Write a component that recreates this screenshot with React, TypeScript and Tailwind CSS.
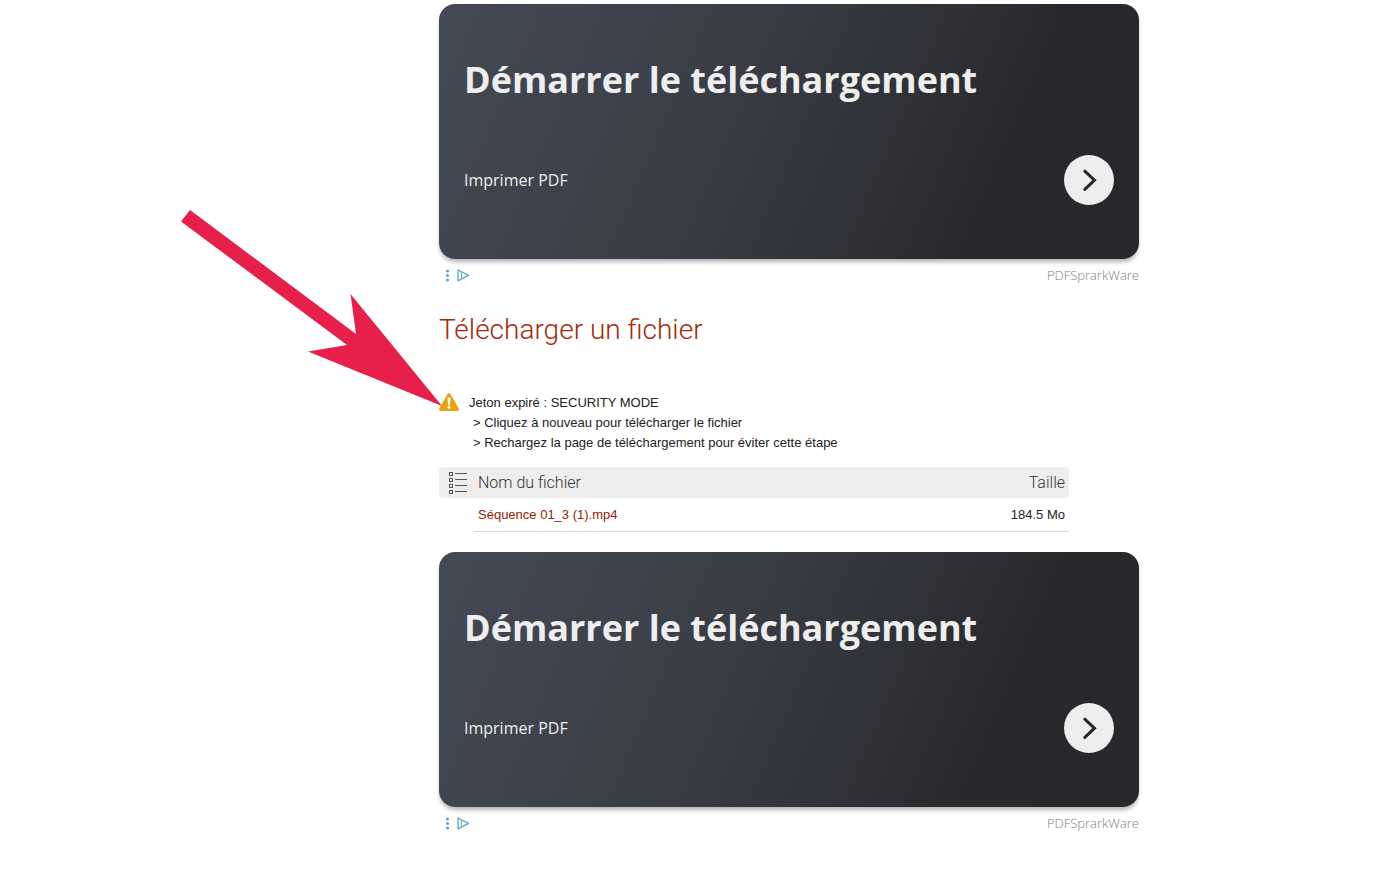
const FILES = [{ name: 'Séquence 01_3 (1).mp4', size: '184.5 Mo' }];

function AdBanner() {
  return (
    <section className="font-['Open_Sans',sans-serif]">
      <div className="flex h-[255px] flex-col rounded-2xl bg-linear-[113deg,#434955_0%,#3b3f48_34%,#32343b_58%,#29292d_77%,#28282c_100%] px-[25px] pt-[51px] text-[#eeeeee] shadow-[0_4px_4px_-1px_rgba(0,0,0,0.3)]">
        <h2 className="text-4xl leading-[50px] font-bold">Démarrer le téléchargement</h2>
        <div className="mt-[50px] flex items-center justify-between">
          <span className="text-base">Imprimer PDF</span>
          <button
            aria-label="Ouvrir"
            className="flex size-[50px] items-center justify-center rounded-full bg-[#eeeeee]"
          >
            <svg viewBox="0 0 50 50" className="size-[50px]" fill="none" stroke="#27272b" strokeWidth="3" strokeLinecap="round">
              <path d="M20.8 16.2 L30.5 25.2 L20.8 34.4" />
            </svg>
          </button>
        </div>
      </div>
      {/* Ad choices */}
      <div className="flex h-[33px] items-center justify-between">
        <svg viewBox="0 0 32 16" className="h-4 w-8" fill="none" stroke="#5ba7cb">
          <g fill="#5ba7cb" stroke="none">
            <circle cx="8.5" cy="3" r="1.6" />
            <circle cx="8.5" cy="7.5" r="1.6" />
            <circle cx="8.5" cy="12" r="1.6" />
          </g>
          <path d="M19 2 L29.5 7.4 L19 12.8 Z" strokeWidth="1.3" strokeLinejoin="round" />
          <path d="M22.4 4.4 V10.4" strokeWidth="1" />
        </svg>
        <span className="text-[13px] font-light text-[#808080]">PDFSprarkWare</span>
      </div>
    </section>
  );
}

function WarningIcon() {
  return (
    <svg viewBox="0 0 20 18" className="h-[18px] w-5 shrink-0">
      <path d="M10 0.2 C10.9 0.2 11.4 0.8 11.8 1.5 L19.6 15.2 C20.4 16.7 19.8 18 18.2 18 H1.8 C0.2 18 -0.4 16.7 0.4 15.2 L8.2 1.5 C8.6 0.8 9.1 0.2 10 0.2 Z" fill="#e5a50a" />
      <path d="M8.5 4.6 H11.5 L11 11.8 H9 Z" fill="#fff" />
      <circle cx="10" cy="14.2" r="1.5" fill="#fff" />
    </svg>
  );
}

function FileListIcon() {
  return (
    <svg viewBox="0 0 20 24" className="h-6 w-5" fill="none" stroke="#555" strokeWidth="1">
      {[2, 8, 14, 20].map((y) => (
        <g key={y}>
          <rect x="2.5" y={y - 0.5} width="3" height="3" />
          <path d={`M8 ${y + 0.5} H20`} />
        </g>
      ))}
    </svg>
  );
}

export default function App() {
  return (
    <div className="relative min-h-screen bg-white pt-1 pl-48 font-['Liberation_Sans',Arial,sans-serif] text-[13px] text-[#222222]">
      <main className="mx-auto max-w-[700px]">
        <div className="relative">
          <AdBanner />
          {/* Arrow pointing at the expired token message */}
          <svg
            viewBox="0 0 262 198"
            className="pointer-events-none absolute top-[205px] -left-[259px] z-10 h-[198px] w-[262px]"
            fill="#e71f4b"
          >
            <path d="M10 1 L176 125 L170.5 85 L262 197 L128 142.5 L167 136 L1 12.5 Z" />
          </svg>
        </div>

        <h1 className="mt-[18px] font-['Roboto',sans-serif] text-[28px] leading-10 font-light text-[#a52a0a]">
          Télécharger un fichier
        </h1>

        <div className="mt-[43px] flex gap-[10px] leading-5">
          <WarningIcon />
          <div>
            <p>Jeton expiré : SECURITY MODE</p>
            <p className="pl-1">&gt; Cliquez à nouveau pour télécharger le fichier</p>
            <p className="pl-1">&gt; Rechargez la page de téléchargement pour éviter cette étape</p>
          </div>
        </div>

        <table className="mt-[14px] w-[90%] border-separate border-spacing-0">
          <thead className="font-['Roboto',sans-serif] text-base leading-6 text-[#333333]">
            <tr className="h-[31px] bg-[#eeeeee]">
              <th className="w-[35px] rounded-l pl-2">
                <FileListIcon />
              </th>
              <th className="pl-1 text-left font-light">Nom du fichier</th>
              <th className="rounded-r pr-1 text-right font-light">Taille</th>
            </tr>
          </thead>
          <tbody>
            {FILES.map((file) => (
              <tr key={file.name} className="h-[34px]">
                <td />
                <td className="border-b border-[#d5d5d5] pl-1">
                  <a href="#" className="text-[#992200]">{file.name}</a>
                </td>
                <td className="border-b border-[#d5d5d5] pr-1 text-right">{file.size}</td>
              </tr>
            ))}
          </tbody>
        </table>

        <div className="mt-5">
          <AdBanner />
        </div>
      </main>
    </div>
  );
}
